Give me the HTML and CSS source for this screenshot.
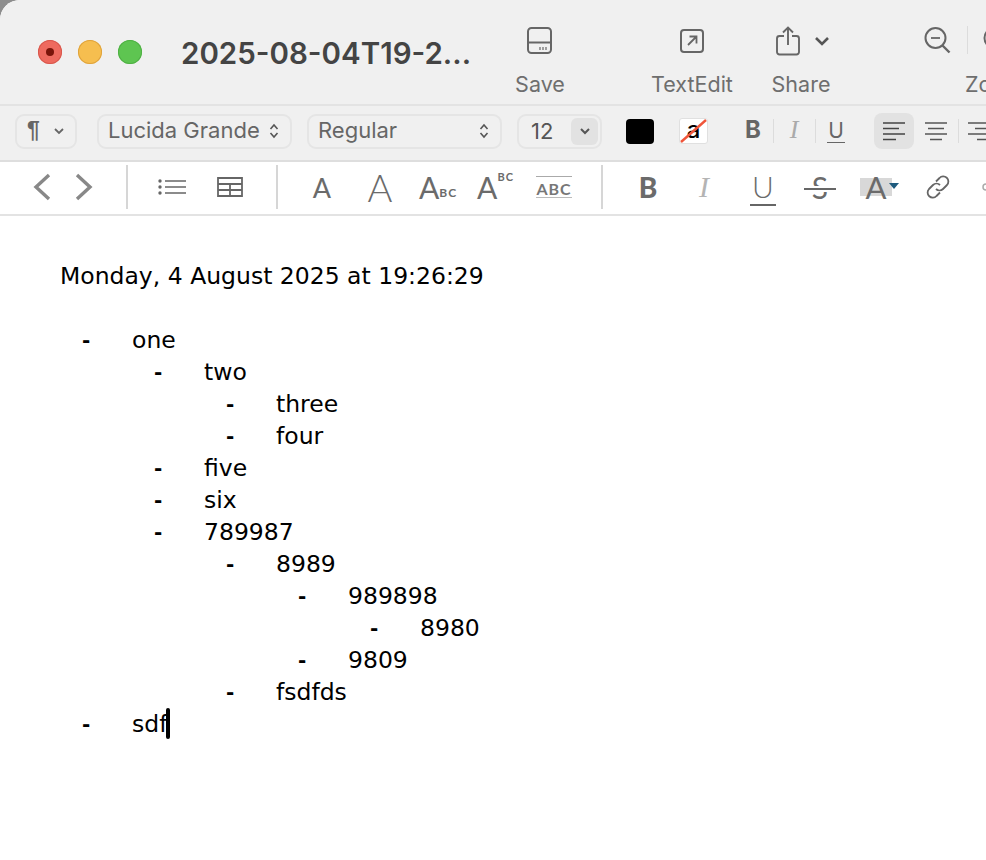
FILE: index.html
```html
<!DOCTYPE html>
<html lang="en">
<head>
<meta charset="utf-8">
<title>2025-08-04T19-26-29</title>
<link rel="stylesheet" href="styles.css">
</head>
<body>
<div class="window">
  <header class="titlebar">
    <div class="lights">
      <span class="light red"><i></i></span>
      <span class="light yellow"></span>
      <span class="light green"></span>
    </div>
    <div class="title">2025-08-04T19-2...</div>
    <div class="tool t-save">
      <svg class="ticon" width="28" height="30" viewBox="0 0 28 30"><rect x="2" y="2" width="23" height="25" rx="3.5" fill="none" stroke="#666" stroke-width="2"/><path d="M2 16.5h23" stroke="#666" stroke-width="2"/><path d="M14 21v3M17 21v3M20 21v3" stroke="#666" stroke-width="1.2"/></svg>
      <span class="tlabel">Save</span>
    </div>
    <div class="tool t-edit">
      <svg class="ticon" width="28" height="30" viewBox="0 0 28 30"><rect x="3" y="4" width="22" height="22" rx="3" fill="none" stroke="#666" stroke-width="2"/><path d="M10 19l8-8M11.500 10.500h7v7" fill="none" stroke="#666" stroke-width="1.800"/></svg>
      <span class="tlabel">TextEdit</span>
    </div>
    <div class="tool t-share">
      <svg class="ticon" width="60" height="30" viewBox="0 0 60 30"><path d="M10 10H5.500a2.500 2.500 0 0 0-2.500 2.500V26a2.500 2.500 0 0 0 2.500 2.500h17a2.500 2.500 0 0 0 2.500-2.500V12.500a2.500 2.500 0 0 0-2.500-2.500H18" fill="none" stroke="#666" stroke-width="1.900"/><path d="M14 19V2M9 6.500L14 1.500l5 5" fill="none" stroke="#666" stroke-width="1.900"/><path d="M42 12l6 6 6-6" fill="none" stroke="#555" stroke-width="2.600"/></svg>
      <span class="tlabel slabel">Share</span>
    </div>
    <div class="tool t-zoom">
      <div class="zoomicons">
        <svg width="28" height="30" viewBox="0 0 28 30"><circle cx="11.500" cy="12" r="10" fill="none" stroke="#666" stroke-width="2"/><path d="M7 12h9" stroke="#666" stroke-width="1.800"/><path d="M18.500 19.500l7 7" stroke="#666" stroke-width="2.400"/></svg>
        <span class="zoomsep"></span>
        <svg width="28" height="30" viewBox="0 0 28 30"><circle cx="11.500" cy="12" r="10" fill="none" stroke="#666" stroke-width="2"/></svg>
      </div>
      <span class="tlabel zlabel">Zoom</span>
    </div>
  </header>

  <div class="formatbar">
    <div class="popup p-para"><span class="pilcrow">¶</span><svg width="12" height="8" viewBox="0 0 12 8"><path d="M2 2l4 4 4-4" fill="none" stroke="#666" stroke-width="1.800"/></svg></div>
    <div class="popup p-font"><span>Lucida Grande</span><svg class="updown" width="10" height="16" viewBox="0 0 10 16"><path d="M1.500 6L5 2l3.500 4M1.500 10L5 14l3.500-4" fill="none" stroke="#555" stroke-width="1.600"/></svg></div>
    <div class="popup p-style"><span>Regular</span><svg class="updown" width="10" height="16" viewBox="0 0 10 16"><path d="M1.500 6L5 2l3.500 4M1.500 10L5 14l3.500-4" fill="none" stroke="#555" stroke-width="1.600"/></svg></div>
    <div class="popup p-size"><span class="sizeval">12</span><span class="sizebtn"><svg width="12" height="8" viewBox="0 0 12 8"><path d="M2 2l4 4 4-4" fill="none" stroke="#555" stroke-width="2"/></svg></span></div>
    <span class="well"></span>
    <span class="bgwell">a<svg class="slash" width="29" height="26" viewBox="0 0 29 26"><path d="M2 24L27 2" stroke="#f0553a" stroke-width="2.400"/></svg></span>
    <span class="fmt f-b">B</span>
    <span class="fsep"></span>
    <span class="fmt f-i">I</span>
    <span class="fsep"></span>
    <span class="fmt f-u">U</span>
    <span class="alignbox">
      <svg width="24" height="22" viewBox="0 0 24 22"><path d="M1 3h22M1 8.500h16M1 14h22M1 19.500h13" stroke="#444" stroke-width="1.700"/></svg>
    </span>
    <span class="aligncell">
      <svg width="24" height="22" viewBox="0 0 24 22"><path d="M1 3h22M4 8.500h16M1 14h22M6 19.500h12" stroke="#555" stroke-width="1.700"/></svg>
    </span>
    <span class="fsep"></span>
    <span class="aligncell2">
      <svg width="24" height="22" viewBox="0 0 24 22"><path d="M1 3h22M8 8.500h15M1 14h22M10 19.500h13" stroke="#555" stroke-width="1.700"/></svg>
    </span>
  </div>

  <div class="ruler">
    <span class="cell w42"><svg width="18" height="28" viewBox="0 0 18 28"><path d="M16 2L3 14l13 12" fill="none" stroke="#888" stroke-width="3.400"/></svg></span>
    <span class="cell w42"><svg width="18" height="28" viewBox="0 0 18 28"><path d="M2 2l13 12L2 26" fill="none" stroke="#888" stroke-width="3.400"/></svg></span>
    <span class="rsep first"></span>
    <span class="cell w58"><svg width="28" height="16" viewBox="0 0 28 16"><g fill="#666"><circle cx="2" cy="2" r="1.700"/><circle cx="2" cy="8" r="1.700"/><circle cx="2" cy="14" r="1.700"/></g><path d="M7 2h21M7 8h21M7 14h21" stroke="#666" stroke-width="1.700"/></svg></span>
    <span class="cell w58"><svg width="26" height="20" viewBox="0 0 26 20"><path d="M1 1h24v18H1zM1 7h24M1 13h24M13 7v12" fill="none" stroke="#666" stroke-width="1.800"/></svg></span>
    <span class="rsep second"></span>
    <span class="cell w58 ra a-sm">A</span>
    <span class="cell w58 ra a-lg">A</span>
    <span class="cell w58 ra a-md">A<small>BC</small></span>
    <span class="cell w57 ra a-md">A<sup>BC</sup></span>
    <span class="cell w60 ra"><span class="abc">ABC</span></span>
    <span class="rsep third"></span>
    <span class="cell w56 rb">B</span>
    <span class="cell w56 ri">I</span>
    <span class="cell w62 ru"><span>U</span></span>
    <span class="cell w52 rs"><span>S</span></span>
    <span class="cell w60 rh"><span class="hl">A</span><svg class="caret" width="10" height="6" viewBox="0 0 10 6"><path d="M0 0h10L5 6z" fill="#1d5a7d"/></svg></span>
    <span class="cell w64"><svg width="26" height="26" viewBox="0 0 26 26"><g fill="none" stroke="#666" stroke-width="1.800"><path d="M11 7.500l3.500-3.500a5 5 0 0 1 7.500 7l-4 4a5 5 0 0 1-7 0"/><path d="M15 18.500L11.500 22a5 5 0 0 1-7.500-7l4-4a5 5 0 0 1 7 0"/></g></svg></span>
    <span class="cell w40"><svg width="16" height="8" viewBox="0 0 16 8"><circle cx="4" cy="4" r="3" fill="none" stroke="#aaa" stroke-width="1.500"/></svg></span>
  </div>

  <main class="doc">
    <p class="line">Monday, 4 August 2025 at 19:26:29</p>
    <p class="line blank">&nbsp;</p>
    <ul>
      <li>one
        <ul>
          <li>two
            <ul>
              <li>three</li>
              <li>four</li>
            </ul>
          </li>
          <li>five</li>
          <li>six</li>
          <li>789987
            <ul>
              <li>8989
                <ul>
                  <li>989898
                    <ul>
                      <li>8980</li>
                    </ul>
                  </li>
                  <li>9809</li>
                </ul>
              </li>
              <li>fsdfds</li>
            </ul>
          </li>
        </ul>
      </li>
      <li>sdf<span class="textcaret"></span></li>
    </ul>
  </main>
</div>
</body>
</html>
```
FILE: styles.css
```css
* { box-sizing: border-box; }
html, body { margin: 0; height: 100%; background: #8d8d8d; overflow: hidden; }
.window {
  width: 986px; height: 860px; background: #fff; overflow: hidden;
  border-top-left-radius: 20px;
  font-family: Inter, "Liberation Sans", sans-serif;
  display: flex; flex-direction: column;
}

/* title bar */
.titlebar {
  height: 106px; flex: none; background: #f0f0f0; border-bottom: 2px solid #e3e3e3;
  display: flex; align-items: flex-start; white-space: nowrap;
}
.lights { display: flex; gap: 16px; margin: 40px 0 0 38px; width: 143px; flex: none; }
.light { width: 24px; height: 24px; border-radius: 50%; display: flex; align-items: center; justify-content: center; }
.red { background: #ee6a5f; box-shadow: inset 0 0 0 1px #d8574c; }
.red i { width: 8px; height: 8px; border-radius: 50%; background: #7a140a; }
.yellow { background: #f6be4f; box-shadow: inset 0 0 0 1px #dfa33c; }
.green { background: #5ec551; box-shadow: inset 0 0 0 1px #4fb044; }
.title { width: 299px; flex: none; margin-top: 35px; font-size: 29.500px; line-height: 36px; font-weight: 600; color: #444; }
.tool { flex: none; display: flex; flex-direction: column; align-items: center; padding-top: 26px; }
.ticon { display: block; }
.tlabel { font-size: 21.500px; line-height: 26px; color: #6e6e6e; margin-top: 15px; }
.t-save { width: 136px; margin-left: -8px; }
.t-edit { width: 168px; }
.t-share { width: 60px; margin-left: -2px; }
.slabel { margin-right: 6px; }
.t-zoom { width: 90px; margin-left: 98px; align-items: flex-start; }
.zoomicons { display: flex; align-items: flex-start; gap: 15px; margin-left: -8px; height: 30px; }
.zoomsep { width: 1px; height: 28px; background: #dcdcdc; }
.zlabel { margin-left: 33px; }

/* format bar */
.formatbar {
  height: 56px; flex: none; background: #f0f0f0; border-bottom: 2px solid #dedede;
  display: flex; align-items: center; padding: 0 0 4px 15px; white-space: nowrap; color: #666;
}
.popup {
  height: 35px; flex: none; border: 2px solid #e5e5e5; border-radius: 9px; display: flex; align-items: center;
  justify-content: space-between; font-size: 22px; line-height: 28px; color: #666;
}
.popup > span:first-child { margin-top: -2px; }
.p-para { width: 62px; padding: 0 10px; margin-right: 20px; }
.pilcrow { font-size: 23px; font-weight: 700; font-family: "Liberation Sans", sans-serif; color: #666; }
.p-font { width: 195px; padding: 0 11px 0 9px; margin-right: 15px; }
.p-style { width: 195px; padding: 0 11px 0 9px; margin-right: 15px; }
.p-size { width: 85px; padding: 0 2px 0 12px; margin-right: 24px; }
.sizeval { color: #555; font-size: 22px; }
.popup > .sizeval:first-child { margin-top: 0; }
.sizebtn { width: 27px; height: 27px; border-radius: 6px; background: #e2e2e2; display: flex; align-items: center; justify-content: center; }
.well { width: 28px; height: 25px; background: #000; border-radius: 4px; flex: none; margin-right: 25px; }
.bgwell {
  position: relative; width: 29px; height: 26px; background: #fff; border: 1px solid #e0e0e0; border-radius: 3px; flex: none;
  font-size: 24px; font-weight: 500; line-height: 22px; color: #000; text-align: center; margin-right: 35px;
}
.slash { position: absolute; left: -1px; top: -1px; }
.fmt { flex: none; font-size: 21px; text-align: center; }
.f-b { width: 20px; font-size: 24px; font-weight: 700; color: #666; margin-right: 10px; margin-top: -3px; }
.f-i { width: 20px; font: italic 26px "Liberation Serif", serif; color: #aaa; margin: -3px 11px 0 10px; }
.f-u { width: 18px; color: #666; border-bottom: 1.500px solid #666; line-height: 22px; margin: 0 29px 0 11px; }
.fsep { width: 1px; height: 24px; background: #dcdcdc; flex: none; }
.alignbox { width: 40px; height: 36px; border-radius: 8px; background: #e2e2e2; flex: none; display: flex; align-items: center; justify-content: center; }
.aligncell { width: 44px; flex: none; display: flex; justify-content: center; }
.aligncell2 { flex: none; margin-left: 8px; display: flex; }

/* second bar */
.ruler {
  height: 54px; flex: none; background: #fff; border-bottom: 2px solid #e3e3e3;
  display: flex; align-items: center; padding: 0 0 2px 21px; white-space: nowrap; color: #6b6b6b;
}
.cell { flex: none; height: 44px; display: flex; align-items: center; justify-content: center; position: relative; }
.w40 { width: 40px; }
.w42 { width: 42px; }
.w52 { width: 52px; }
.w56 { width: 56px; }
.w57 { width: 57px; }
.w58 { width: 58px; }
.w60 { width: 60px; }
.w62 { width: 62px; }
.w64 { width: 64px; }
.rsep { width: 2px; height: 44px; background: #d6d6d6; flex: none; }
.rsep.first { margin: 0 15px 0 21px; }
.rsep.second { margin: 0 15px 0 17px; }
.rsep.third { margin: 0 17px; }
.ra { font-family: Lato, "Open Sans", sans-serif; font-weight: 400; }
.a-sm { font-size: 27px; }
.a-lg { font-size: 38px; font-weight: 300; }
.a-md { font-size: 30px; }
.a-md small { font-size: 12px; font-weight: 700; letter-spacing: 1px; align-self: flex-end; margin-bottom: 9px; }
.a-md sup { font-size: 11px; font-weight: 700; letter-spacing: 1px; align-self: flex-start; margin-top: 5px; line-height: 14px; }
.abc { font-size: 16px; font-weight: 700; color: #777; letter-spacing: 1px; padding: 4px 0 0; line-height: 16px; border-top: 1.500px solid #aaa; border-bottom: 1.500px solid #bbb; }
.rb { font-size: 28px; font-weight: 900; font-family: Lato, sans-serif; }
.ri { font: italic 30px "Liberation Serif", serif; color: #b4b4b4; }
.ru { font-family: Lato, sans-serif; font-size: 30px; font-weight: 300; }
.ru span { border-bottom: 2px solid #666; padding: 0 2px; line-height: 36px; }
.rs { font-family: Lato, sans-serif; font-size: 30px; font-weight: 400; }
.rs span { position: relative; padding: 0 8px; line-height: 32px; }
.rs span::after { content: ""; position: absolute; left: 0; right: 0; top: 17px; height: 2px; background: #666; box-shadow: 0 -2px 0 #fff, 0 2px 0 #fff; }
.rh { justify-content: flex-start; padding-left: 14px; }
.hl { background: #d8d8d8; width: 32px; height: 18px; font: 400 31px/18px Lato, sans-serif; text-align: center; }
.caret { margin-left: -3px; margin-top: -2px; }

/* document */
.doc { flex: 1; padding: 44px 0 0 60px; font-family: "DejaVu Sans", sans-serif; font-size: 23.500px; line-height: 32px; color: #000; }
.line { margin: 0; }
.doc ul { list-style: none; margin: 0; padding: 0 0 0 72px; }
.doc li::before { content: "-"; display: inline-block; width: 50px; margin-left: -50px; font-weight: 700; font-size: 20px; line-height: 20px; vertical-align: 1px; }
.textcaret { display: inline-block; width: 4px; height: 31px; margin-left: -1px; margin-bottom: -7px; background: #000; border-radius: 2px; line-height: 0; }
```
